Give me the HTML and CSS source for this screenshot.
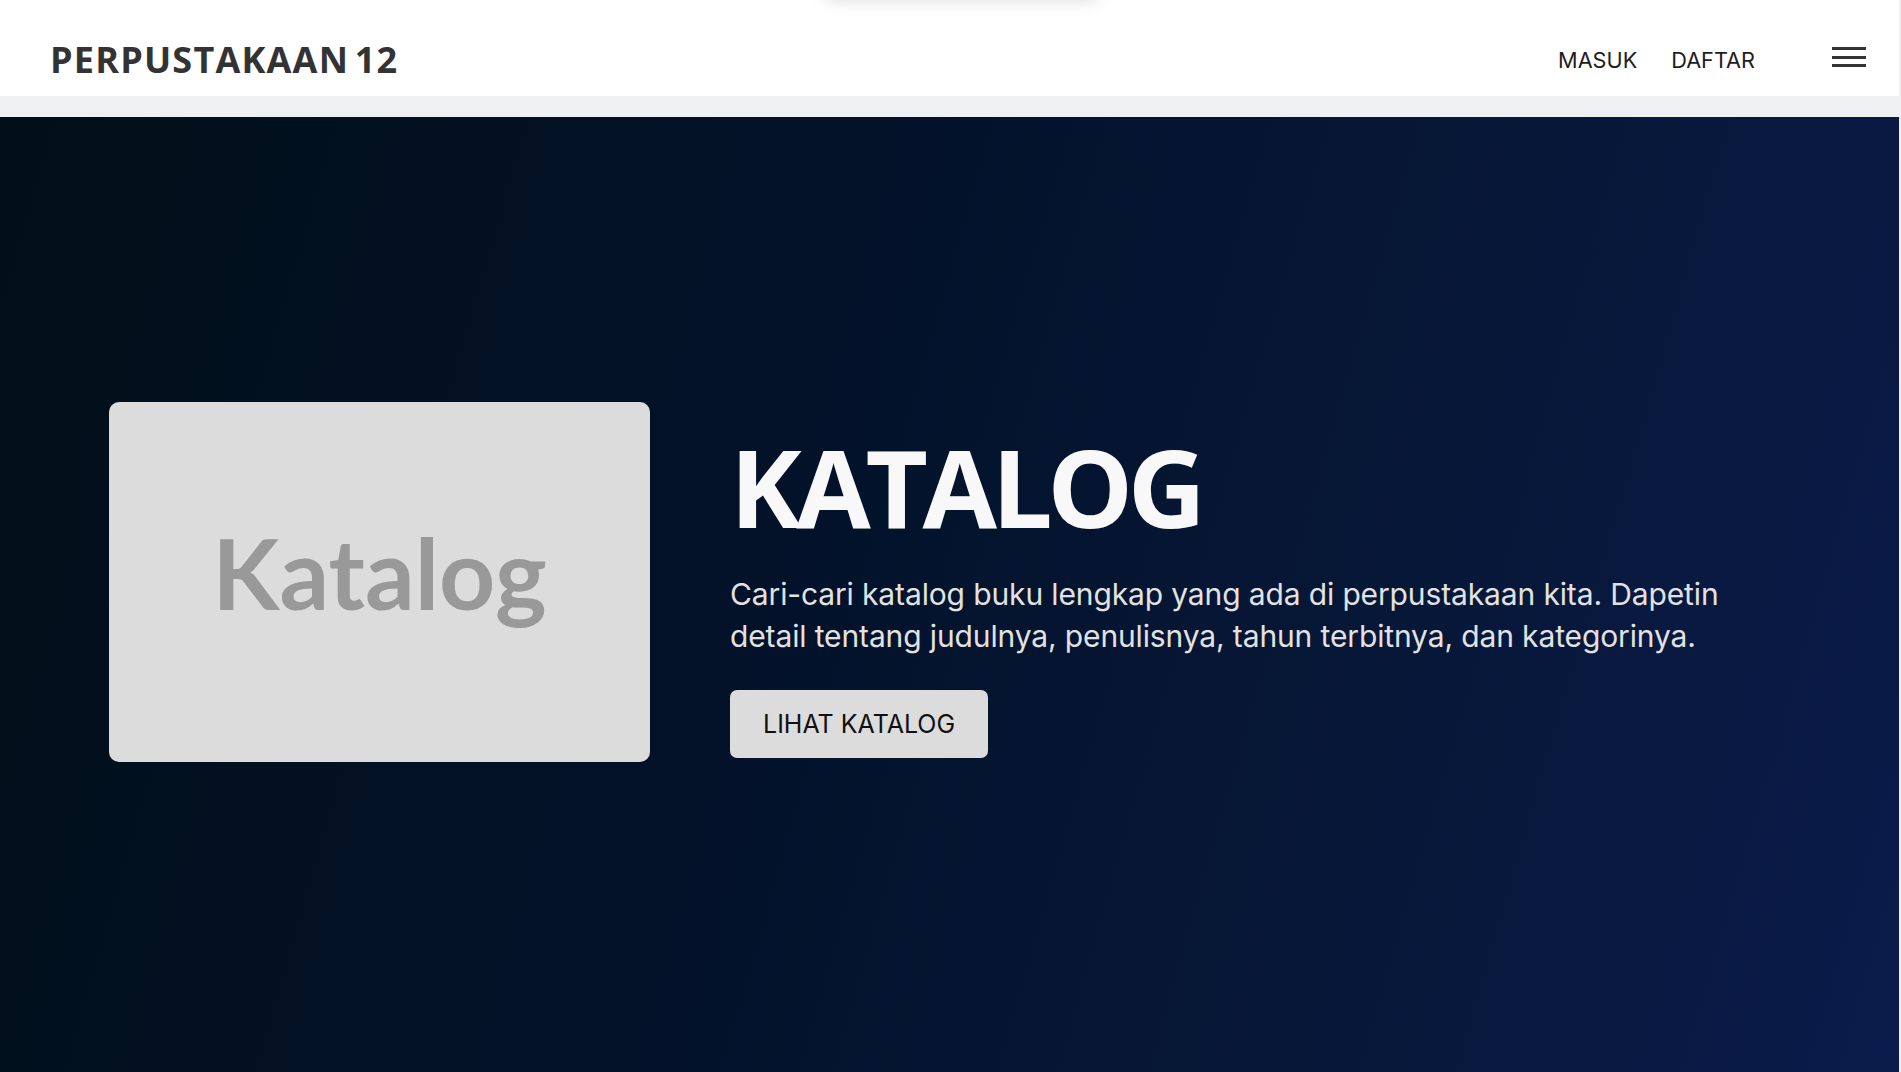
FILE: index.html
```html
<!DOCTYPE html>
<html lang="id">
<head>
<meta charset="utf-8">
<title>Perpustakaan 12</title>
<link rel="stylesheet" href="styles.css">
</head>
<body>
<div class="page">
  <div class="ghost-menu"></div>
  <header class="topbar">
    <div class="brand">PERPUSTAKAAN 12</div>
    <nav class="nav">
      <a class="nav-link" href="#">MASUK</a>
      <a class="nav-link" href="#">DAFTAR</a>
      <button class="burger" aria-label="menu">
        <span></span><span></span><span></span>
      </button>
    </nav>
  </header>
  <div class="strip"></div>
  <section class="hero">
    <div class="thumb"><span>Katalog</span></div>
    <div class="hero-text">
      <h1 class="title">KATALOG</h1>
      <p class="desc">Cari-cari katalog buku lengkap yang ada di perpustakaan kita. Dapetin detail tentang judulnya, penulisnya, tahun terbitnya, dan kategorinya.</p>
      <a class="cta" href="#">LIHAT KATALOG</a>
    </div>
  </section>
</div>
</body>
</html>
```
FILE: styles.css
```css
* { box-sizing: border-box; }
html, body { margin: 0; padding: 0; overflow: hidden; }
body { background: #eff0f1; font-family: "Inter", "Liberation Sans", sans-serif; }
.page { margin-right: 2px; position: relative; }
.ghost-menu {
  position: absolute; top: -60px; left: 50%; transform: translateX(-50%);
  margin-left: 12px;
  width: 275px; height: 60px; background: #fff;
  box-shadow: 0 0 18px rgba(0,0,0,0.14); border-radius: 8px; z-index: 5;
}
.topbar {
  height: 96px; background: #fff;
  display: flex; align-items: center; justify-content: space-between;
  padding: 22px 33px 0 50px;
}
.brand {
  font-family: "Open Sans", sans-serif; font-weight: 700; font-size: 36px;
  color: #333; letter-spacing: 1.2px; word-spacing: -5px;
}
.nav { display: flex; align-items: center; }
.nav-link {
  font-family: "Inter", sans-serif; font-size: 21.7px; color: #1d1d1d;
  text-decoration: none; margin-right: 34px; margin-top: 2px;
}
.nav-link:last-of-type { margin-right: 77px; }
.burger {
  width: 34px; height: 20px; padding: 0; border: 0; background: none;
  display: flex; flex-direction: column; justify-content: space-between;
  margin-top: -4px;
}
.burger span { display: block; height: 3px; background: #333; }
.strip { height: 21px; }
.hero {
  height: calc(100vh - 117px);
  background: linear-gradient(106deg, #010f18 0%, #03122a 42%, #071737 70%, #0b1b4b 100%);
  display: flex; align-items: flex-start;
  padding: 285px 0 0 109px;
}
.thumb {
  width: 541px; height: 360px; background: #dcdcdc; border-radius: 10px;
  display: flex; align-items: center; justify-content: center;
  padding-bottom: 20px; flex-shrink: 0;
}
.thumb span {
  font-family: "Lato", sans-serif; font-weight: 700; font-size: 98px; color: #999;
}
.hero-text { margin-left: 80px; padding-top: 31px; }
.title {
  margin: 0; font-family: "Open Sans", sans-serif; font-weight: 700;
  font-size: 108px; line-height: 108px; color: #f8f8f8; letter-spacing: -5.4px;
}
.desc {
  margin: 32px 0 0; width: 1030px; font-size: 30px; line-height: 42px;
  color: #e2e2e2; font-weight: 400; letter-spacing: -0.13px;
}
.cta {
  display: inline-flex; align-items: center; margin-top: 33px;
  height: 68px; padding: 0 33px; background: #dcdcdc; border-radius: 7px;
  color: #111; text-decoration: none; font-size: 25px;
}
```
